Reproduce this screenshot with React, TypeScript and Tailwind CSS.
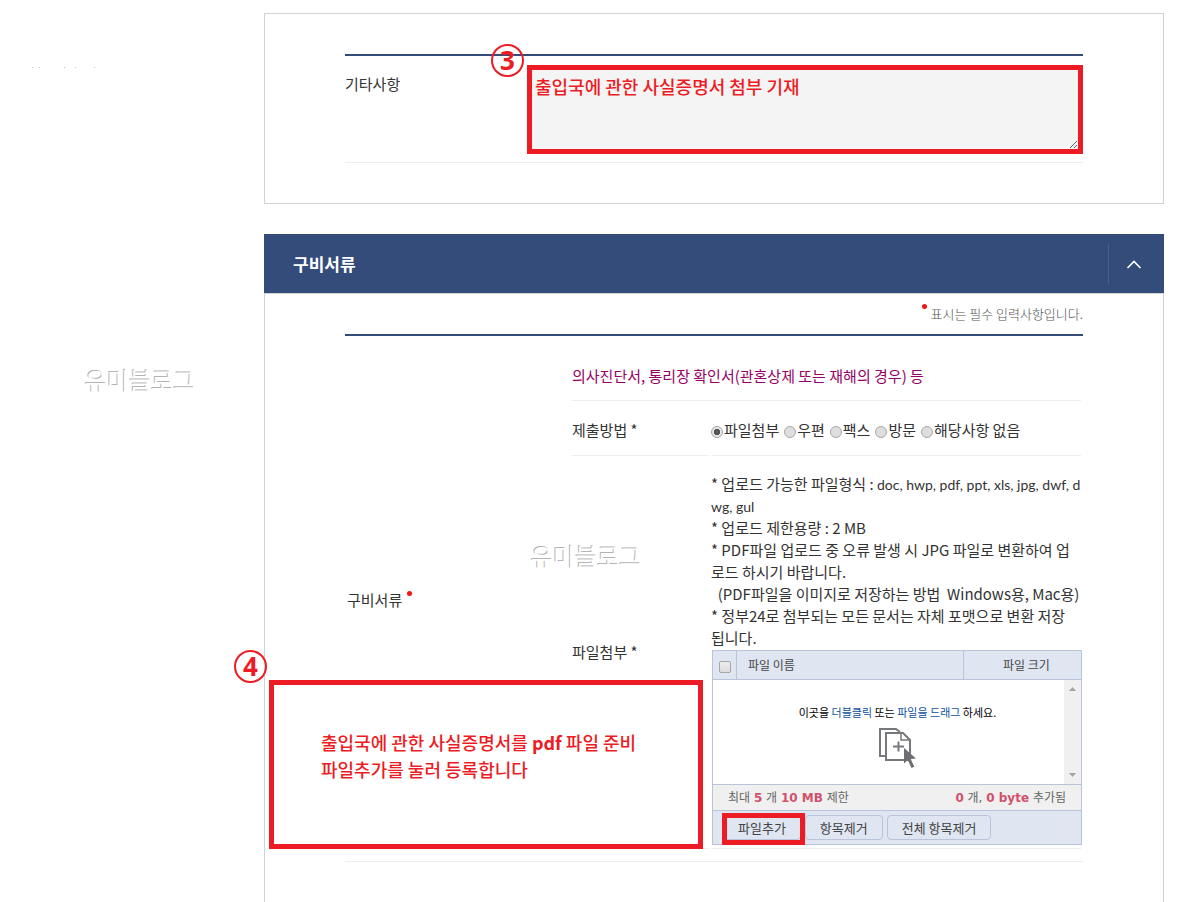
import { useState } from 'react'

const methods = ['파일첨부', '우편', '팩스', '방문', '해당사항 없음']

function StepNumber({ n, className }: { n: number; className: string }) {
  return (
    <span
      className={`absolute grid size-[33px] place-items-center rounded-full border-2 border-[#ed1c24] pb-px font-['Open_Sans',sans-serif] text-[26px] leading-none font-bold text-[#ed1c24] ${className}`}
    >
      {n}
    </span>
  )
}

function Watermark({ className }: { className: string }) {
  return (
    <span
      aria-hidden="true"
      className={`pointer-events-none absolute text-2xl leading-7 whitespace-nowrap text-white [text-shadow:-1px_-1px_0_#b4b4b4] ${className}`}
    >
      유미블로그
    </span>
  )
}

function RequiredDot() {
  return <span className="mx-px mb-[10px] inline-block size-[5px] rounded-full bg-[#f51414]" />
}

function AddFileIcon() {
  return (
    <svg width="38" height="40" viewBox="0 0 38 40" fill="none" stroke="#77787b" strokeWidth="2">
      <path d="M6 28H1V1h16l4 3" />
      <path d="M7 5h17l7 7v20H7z" fill="#fff" />
      <path d="M22 5v7h9" strokeWidth="1.5" />
      <path d="M14 18.500h11M19.500 13.500v10" />
      <path
        d="M25 20v15.500l3.800-3.500 3.700 8 2.800-1.300-3.600-7.700 5.300-.5z"
        fill="#6d6e71"
        stroke="none"
      />
    </svg>
  )
}

function FileBox() {
  return (
    <div className="-mr-px ml-px border border-[#b9c3d9] bg-[#dfe6f2] text-xs text-[#444]">
      <div className="flex h-[29px] items-center border-b border-[#b9c3d9]">
        <div className="grid h-full w-6 place-items-center border-r border-[#b9c3d9]">
          <input
            type="checkbox"
            aria-label="전체 선택"
            className="mt-1 size-3 appearance-none rounded-xs border border-[#a6a6a6] bg-linear-to-b from-[#eee] to-[#ddd]"
          />
        </div>
        <div className="flex-1 pl-[11px]">파일 이름</div>
        <div className="flex h-full w-[118px] items-center justify-center border-l border-[#b9c3d9] pl-2">
          파일 크기
        </div>
      </div>
      <div className="flex h-[105px] border-b border-[#b9c3d9] bg-white">
        <div className="flex flex-1 flex-col items-center pt-6 pl-[18px]">
          <p className="text-[11px] leading-4 whitespace-nowrap text-black">
            이곳을 <span className="text-[#1050a0]">더블클릭</span> 또는{' '}
            <span className="text-[#1050a0]">파일을 드래그</span> 하세요.
          </p>
          <div className="mt-2">
            <AddFileIcon />
          </div>
        </div>
        <div className="flex w-[17px] flex-col items-center justify-between bg-[#f0f0f0] py-[7px]">
          <svg width="7" height="4" viewBox="0 0 7 4" fill="#a3a3a3">
            <path d="M0 4 3.500 0 7 4z" />
          </svg>
          <svg width="7" height="4" viewBox="0 0 7 4" fill="#a3a3a3">
            <path d="M0 0 3.500 4 7 0z" />
          </svg>
        </div>
      </div>
      <div className="flex h-[26px] items-center justify-between border-b border-[#b9c3d9] bg-[#f0f0f0] px-[15px] font-['DejaVu_Sans','Noto_Sans_CJK_KR',sans-serif] text-[#666]">
        <span>
          최대 <b className="text-[#d0516b]">5</b> 개 <b className="text-[#d0516b]">10 MB</b> 제한
        </span>
        <span>
          <b className="text-[#d0516b]">0</b> 개, <b className="text-[#d0516b]">0 byte</b> 추가됨
        </span>
      </div>
      <div className="flex h-[33px] gap-1 px-[10px] pt-1 text-[13px]">
        <div className="relative">
          <button type="button" className="h-[25px] rounded-sm border border-[#b9c3d9] px-[14px]">
            파일추가
          </button>
          <span className="pointer-events-none absolute -top-[2px] -left-[1px] h-8 w-[83px] border-5 border-[#ed1c24]" />
        </div>
        <button type="button" className="h-[25px] rounded-sm border border-[#b9c3d9] px-[14px]">
          항목제거
        </button>
        <button type="button" className="h-[25px] rounded-sm border border-[#b9c3d9] px-[14px]">
          전체 항목제거
        </button>
      </div>
    </div>
  )
}

export default function App() {
  const [method, setMethod] = useState(methods[0])
  const [open, setOpen] = useState(true)

  return (
    <div className="flex min-h-screen bg-white font-['Noto_Sans_CJK_KR',sans-serif] text-[15px] leading-[22px] text-[#333]">
      <aside className="relative w-[264px] shrink-0">
        <svg className="absolute top-[67px] left-8" width="64" height="1" fill="#c4c4c4">
          <path d="M0 0h1v1H0zM7 0h1v1H7zM32 0h1v1h-1zM43 0h1v1h-1zM62 0h1v1h-1z" />
        </svg>
        <Watermark className="top-[366px] left-[85px]" />
      </aside>

      <main className="mr-[18px] flex flex-1 flex-col pt-[13px]">
        <section className="border border-[#d2d2d2] px-20 py-10">
          <div className="relative flex border-t-2 border-b border-t-[#344c7a] border-b-[#eee] pt-[9px] pb-2">
            <label htmlFor="etc" className="w-[182px] shrink-0 pt-2">
              기타사항
            </label>
            <textarea
              id="etc"
              defaultValue="출입국에 관한 사실증명서 첨부 기재"
              className="block h-[89px] flex-1 border-5 border-[#ed1c24] bg-[#f4f4f4] px-[3px] pt-[3px] text-lg leading-[27px] font-medium text-[#ed1c24] outline-none"
            />
            <StepNumber n={3} className="-top-3 left-[146px]" />
          </div>
        </section>

        <section className="mt-[30px] flex flex-1 flex-col">
          <header className="flex h-[59px] items-center bg-[#344c7a] pl-[29px] text-white">
            <h2 className="flex-1 text-[17px] font-bold">구비서류</h2>
            <button
              type="button"
              aria-label="접기"
              aria-expanded={open}
              onClick={() => setOpen(!open)}
              className="grid h-10 w-14 place-items-center border-l border-[#4a608a] pr-[6px]"
            >
              <svg width="16" height="10" viewBox="0 0 16 10" fill="none" stroke="#fff" strokeWidth="1.6">
                <path d="m1.500 9 6.500-6.500 6.500 6.500" />
              </svg>
            </button>
          </header>

          <div className="relative flex-1 border border-b-0 border-[#d2d2d2] px-20">
            {open && (
              <>
                <p className="text-right text-[13px] leading-10 font-light text-[#555]">
                  <RequiredDot /> 표시는 필수 입력사항입니다.
                </p>
                <div className="flex items-center border-t-2 border-b border-t-[#344c7a] border-b-[#eee] pt-[15px] pb-3">
                  <div className="w-[227px] shrink-0 pl-[2px]">
                    구비서류 <RequiredDot />
                  </div>
                  <div className="min-w-0 flex-1 pr-[2px]">
                    <p className="flex h-[50px] items-center border-b border-[#eee] text-[#960064]">
                      의사진단서, 통리장 확인서(관혼상제 또는 재해의 경우) 등
                    </p>
                    <div className="grid grid-cols-[137px_minmax(0,1fr)] gap-x-[2px]">
                      <div className="flex h-[55px] items-center border-b border-[#eee] pt-1">제출방법 *</div>
                      <div
                        role="radiogroup"
                        aria-label="제출방법"
                        className="flex h-[55px] items-center gap-[5px] border-b border-[#eee] pt-1 whitespace-nowrap"
                      >
                        {methods.map((m) => (
                          <label key={m} className="flex items-center gap-px">
                            <input
                              type="radio"
                              name="method"
                              checked={method === m}
                              onChange={() => setMethod(m)}
                              className="mt-1 size-3 appearance-none rounded-full border border-[#a8a8a8] bg-[#dedede] checked:bg-[radial-gradient(circle,#555_3px,#e6e6e6_3px)]"
                            />
                            {m}
                          </label>
                        ))}
                      </div>
                      <div className="flex items-center border-b border-[#eee]">파일첨부 *</div>
                      <div className="border-b border-[#eee] pt-[17px] pb-[3px]">
                        <p className="mb-px whitespace-pre">
                          * 업로드 가능한 파일형식 :{' '}
                          <span className="font-['Lato',sans-serif] text-sm leading-none">
                            doc, hwp, pdf, ppt, xls, jpg, dwf, d
                            <br />
                            wg, gul
                          </span>
                          <br />
                          * 업로드 제한용량 : 2 MB
                          <br />
                          * PDF파일 업로드 중 오류 발생 시 JPG 파일로 변환하여 업
                          <br />
                          로드 하시기 바랍니다.
                          <br />
                          {'  (PDF파일을 이미지로 저장하는 방법  Windows용, Mac용)'}
                          <br />
                          * 정부24로 첨부되는 모든 문서는 자체 포맷으로 변환 저장
                          <br />
                          됩니다.
                        </p>
                        <FileBox />
                      </div>
                    </div>
                  </div>
                </div>
                <Watermark className="top-[248px] left-[266px]" />
                <StepNumber n={4} className="top-[356px] -left-[31px]" />
                <div className="absolute top-[386px] left-1 h-[169px] w-[434px] border-5 border-[#ed1c24] pt-11 pl-[47px] text-lg leading-[27px] font-medium text-[#ed1c24]">
                  출입국에 관한 사실증명서를 <b>pdf</b> 파일 준비
                  <br />
                  파일추가를 눌러 등록합니다
                </div>
              </>
            )}
          </div>
        </section>
      </main>
    </div>
  )
}
